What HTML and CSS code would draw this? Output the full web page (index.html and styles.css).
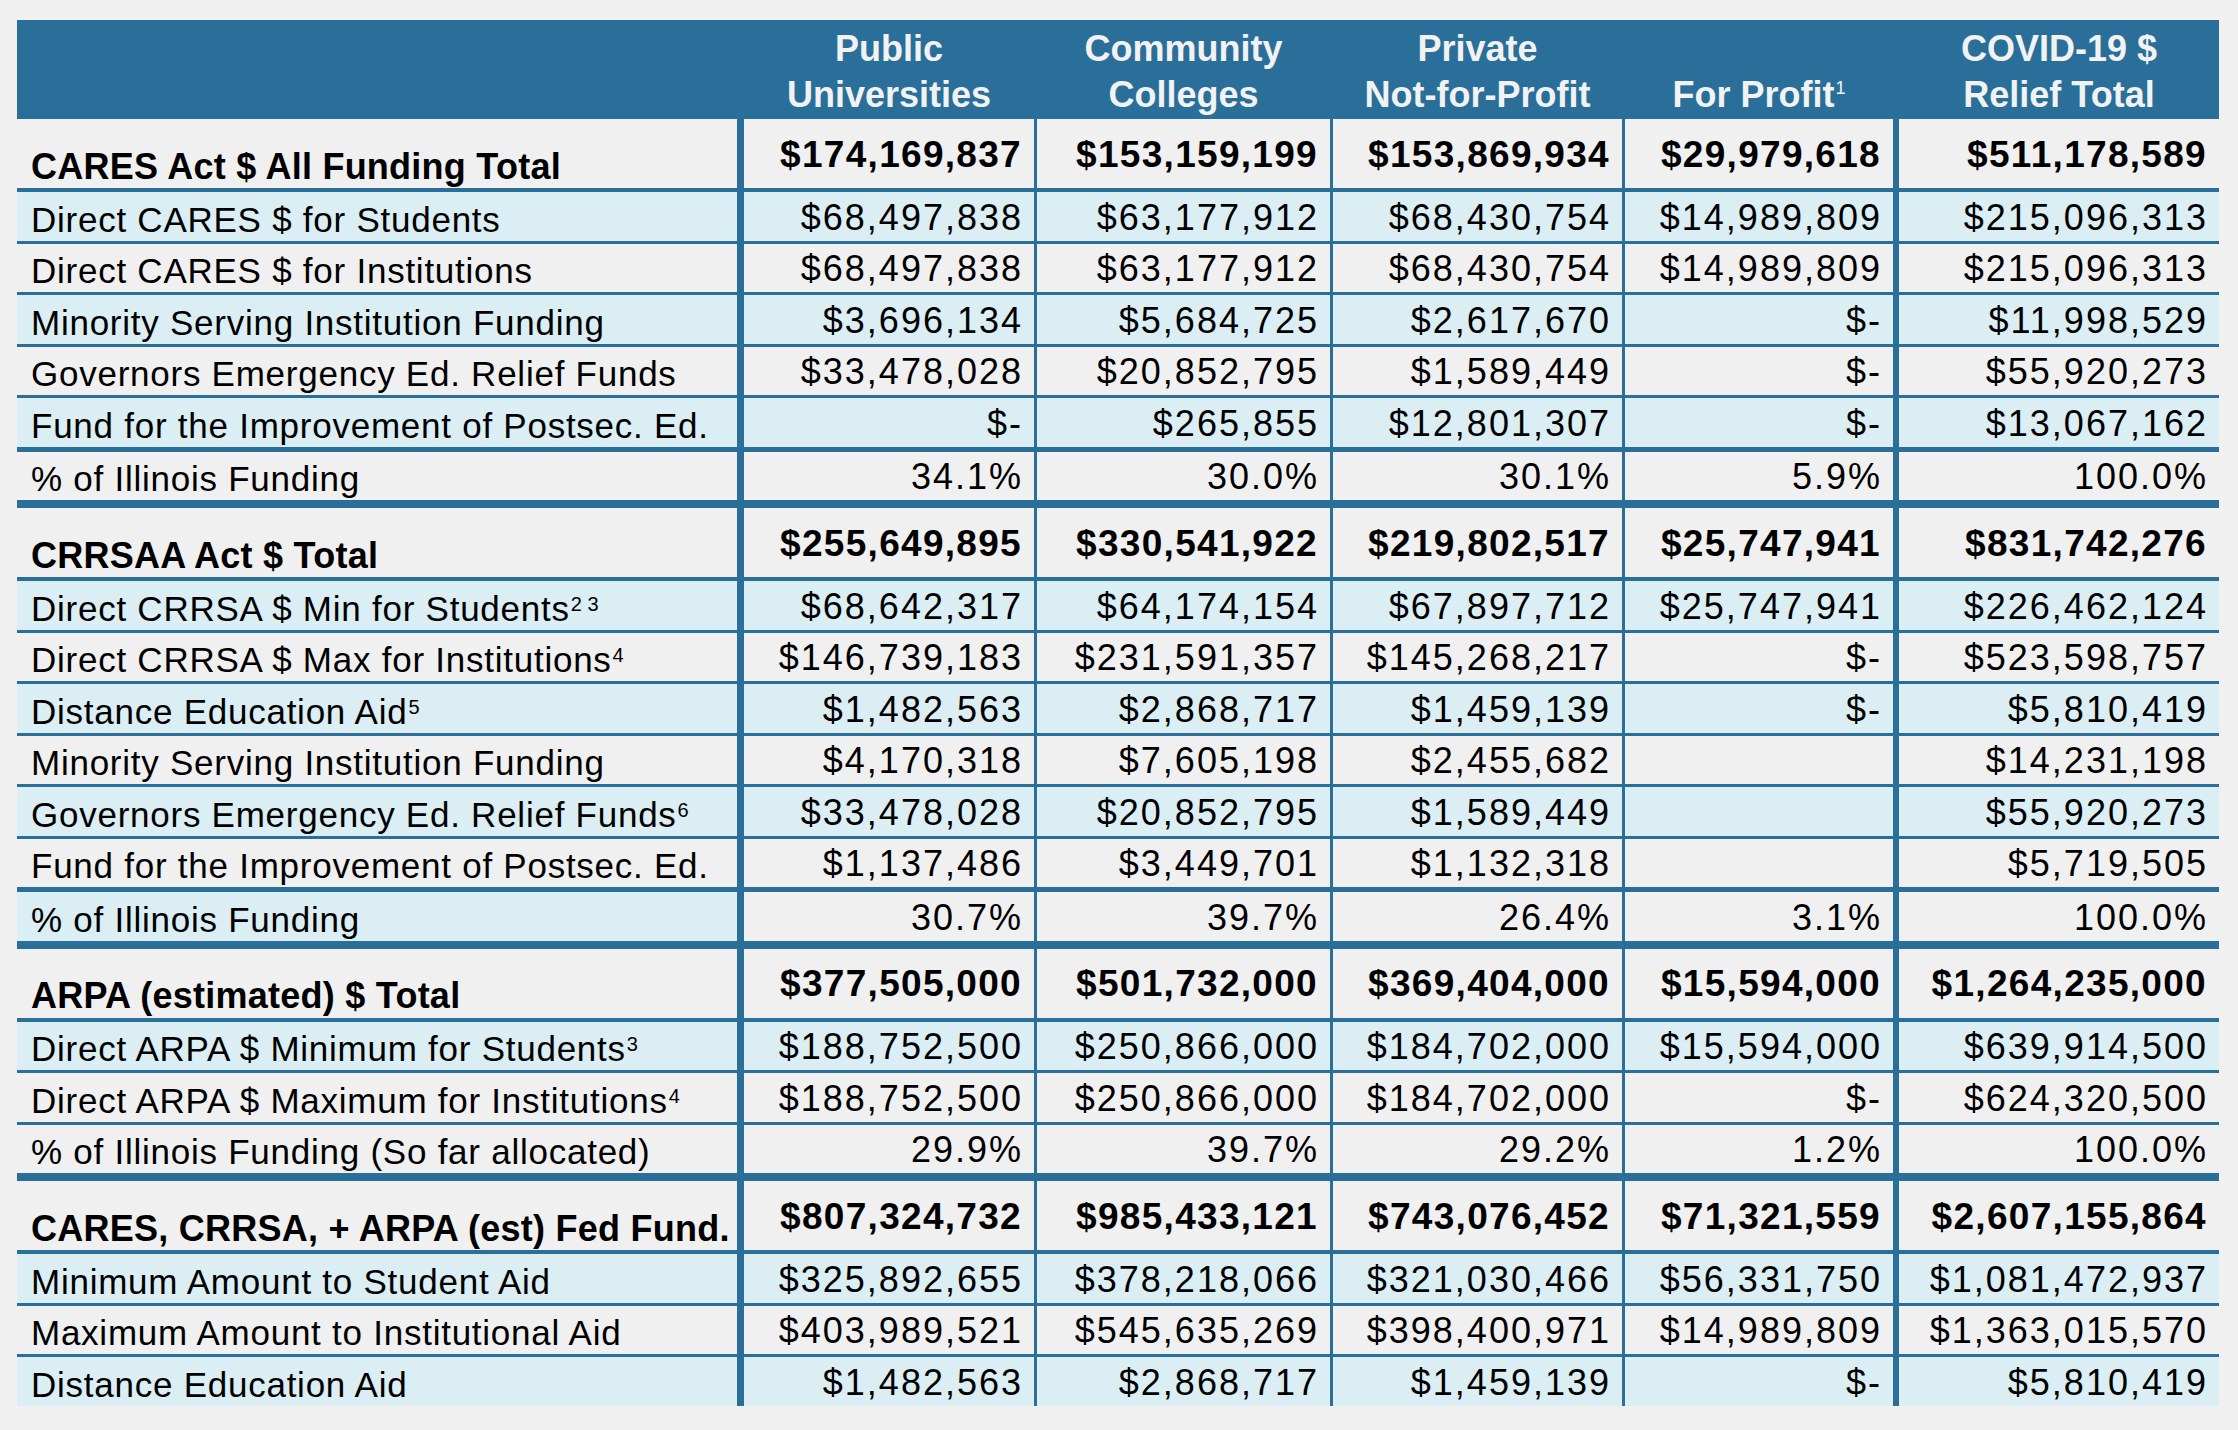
FILE: index.html
```html
<!DOCTYPE html>
<html lang="en">
<head>
<meta charset="utf-8">
<title>COVID-19 Relief Funding</title>
<link rel="stylesheet" href="styles.css">
</head>
<body>
<div class="sheet">
  <div class="row head">
    <div class="c"></div>
    <div class="c"><span>Public<br>Universities</span></div>
    <div class="c"><span>Community<br>Colleges</span></div>
    <div class="c"><span>Private<br>Not-for-Profit</span></div>
    <div class="c"><span>For Profit<sup class="hs">1</sup></span></div>
    <div class="c"><span>COVID-19 $<br>Relief Total</span></div>
  </div>

  <div class="row total">
    <div class="c">CARES Act $ All Funding Total</div>
    <div class="c">$174,169,837</div><div class="c">$153,159,199</div><div class="c">$153,869,934</div><div class="c">$29,979,618</div><div class="c">$511,178,589</div>
  </div>
  <div class="row reg band">
    <div class="c">Direct CARES $ for Students</div>
    <div class="c">$68,497,838</div><div class="c">$63,177,912</div><div class="c">$68,430,754</div><div class="c">$14,989,809</div><div class="c">$215,096,313</div>
  </div>
  <div class="row reg">
    <div class="c">Direct CARES $ for Institutions</div>
    <div class="c">$68,497,838</div><div class="c">$63,177,912</div><div class="c">$68,430,754</div><div class="c">$14,989,809</div><div class="c">$215,096,313</div>
  </div>
  <div class="row reg band">
    <div class="c">Minority Serving Institution Funding</div>
    <div class="c">$3,696,134</div><div class="c">$5,684,725</div><div class="c">$2,617,670</div><div class="c">$-</div><div class="c">$11,998,529</div>
  </div>
  <div class="row reg">
    <div class="c">Governors Emergency Ed. Relief Funds</div>
    <div class="c">$33,478,028</div><div class="c">$20,852,795</div><div class="c">$1,589,449</div><div class="c">$-</div><div class="c">$55,920,273</div>
  </div>
  <div class="row pre band">
    <div class="c">Fund for the Improvement of Postsec. Ed.</div>
    <div class="c">$-</div><div class="c">$265,855</div><div class="c">$12,801,307</div><div class="c">$-</div><div class="c">$13,067,162</div>
  </div>
  <div class="row pct">
    <div class="c">% of Illinois Funding</div>
    <div class="c">34.1%</div><div class="c">30.0%</div><div class="c">30.1%</div><div class="c">5.9%</div><div class="c">100.0%</div>
  </div>

  <div class="row total">
    <div class="c">CRRSAA Act $ Total</div>
    <div class="c">$255,649,895</div><div class="c">$330,541,922</div><div class="c">$219,802,517</div><div class="c">$25,747,941</div><div class="c">$831,742,276</div>
  </div>
  <div class="row reg band">
    <div class="c"><span>Direct CRRSA $ Min for Students<sup>2&nbsp;3</sup></span></div>
    <div class="c">$68,642,317</div><div class="c">$64,174,154</div><div class="c">$67,897,712</div><div class="c">$25,747,941</div><div class="c">$226,462,124</div>
  </div>
  <div class="row reg">
    <div class="c"><span>Direct CRRSA $ Max for Institutions<sup>4</sup></span></div>
    <div class="c">$146,739,183</div><div class="c">$231,591,357</div><div class="c">$145,268,217</div><div class="c">$-</div><div class="c">$523,598,757</div>
  </div>
  <div class="row reg band">
    <div class="c"><span>Distance Education Aid<sup>5</sup></span></div>
    <div class="c">$1,482,563</div><div class="c">$2,868,717</div><div class="c">$1,459,139</div><div class="c">$-</div><div class="c">$5,810,419</div>
  </div>
  <div class="row reg">
    <div class="c">Minority Serving Institution Funding</div>
    <div class="c">$4,170,318</div><div class="c">$7,605,198</div><div class="c">$2,455,682</div><div class="c"></div><div class="c">$14,231,198</div>
  </div>
  <div class="row reg band">
    <div class="c"><span>Governors Emergency Ed. Relief Funds<sup>6</sup></span></div>
    <div class="c">$33,478,028</div><div class="c">$20,852,795</div><div class="c">$1,589,449</div><div class="c"></div><div class="c">$55,920,273</div>
  </div>
  <div class="row pre">
    <div class="c">Fund for the Improvement of Postsec. Ed.</div>
    <div class="c">$1,137,486</div><div class="c">$3,449,701</div><div class="c">$1,132,318</div><div class="c"></div><div class="c">$5,719,505</div>
  </div>
  <div class="row pct band-label">
    <div class="c">% of Illinois Funding</div>
    <div class="c">30.7%</div><div class="c">39.7%</div><div class="c">26.4%</div><div class="c">3.1%</div><div class="c">100.0%</div>
  </div>

  <div class="row total">
    <div class="c">ARPA (estimated) $ Total</div>
    <div class="c">$377,505,000</div><div class="c">$501,732,000</div><div class="c">$369,404,000</div><div class="c">$15,594,000</div><div class="c">$1,264,235,000</div>
  </div>
  <div class="row reg band">
    <div class="c"><span>Direct ARPA $ Minimum for Students<sup>3</sup></span></div>
    <div class="c">$188,752,500</div><div class="c">$250,866,000</div><div class="c">$184,702,000</div><div class="c">$15,594,000</div><div class="c">$639,914,500</div>
  </div>
  <div class="row reg">
    <div class="c"><span>Direct ARPA $ Maximum for Institutions<sup>4</sup></span></div>
    <div class="c">$188,752,500</div><div class="c">$250,866,000</div><div class="c">$184,702,000</div><div class="c">$-</div><div class="c">$624,320,500</div>
  </div>
  <div class="row pct">
    <div class="c">% of Illinois Funding (So far allocated)</div>
    <div class="c">29.9%</div><div class="c">39.7%</div><div class="c">29.2%</div><div class="c">1.2%</div><div class="c">100.0%</div>
  </div>

  <div class="row total">
    <div class="c">CARES, CRRSA, + ARPA (est) Fed Fund.</div>
    <div class="c">$807,324,732</div><div class="c">$985,433,121</div><div class="c">$743,076,452</div><div class="c">$71,321,559</div><div class="c">$2,607,155,864</div>
  </div>
  <div class="row reg band">
    <div class="c">Minimum Amount to Student Aid</div>
    <div class="c">$325,892,655</div><div class="c">$378,218,066</div><div class="c">$321,030,466</div><div class="c">$56,331,750</div><div class="c">$1,081,472,937</div>
  </div>
  <div class="row reg">
    <div class="c">Maximum Amount to Institutional Aid</div>
    <div class="c">$403,989,521</div><div class="c">$545,635,269</div><div class="c">$398,400,971</div><div class="c">$14,989,809</div><div class="c">$1,363,015,570</div>
  </div>
  <div class="row end band">
    <div class="c">Distance Education Aid</div>
    <div class="c">$1,482,563</div><div class="c">$2,868,717</div><div class="c">$1,459,139</div><div class="c">$-</div><div class="c">$5,810,419</div>
  </div>
</div>
</body>
</html>
```

FILE: styles.css
```css
html, body {
  margin: 0;
  padding: 0;
  background: #f0f0f0;
}

body {
  font-family: "Liberation Sans", Arial, sans-serif;
  color: #000;
}

.sheet {
  margin: 20px 0 0 17px;
  width: 2202px;
}

.row {
  display: grid;
  grid-template-columns: 727px 293px 296px 292px 274px 320px;
  grid-template-rows: 1fr;
}

.c {
  box-sizing: border-box;
  border-right: 3px solid #2a6f99;
  border-bottom: 3px solid #2a6f99;
  display: flex;
  align-items: flex-end;
  justify-content: flex-end;
  padding: 0 11px 5px 0;
  font-size: 36px;
  line-height: 1;
  letter-spacing: 2px;
  white-space: nowrap;
}

.c:first-child {
  border-right-width: 7px;
  justify-content: flex-start;
  padding-left: 14px;
  padding-bottom: 4px;
  font-size: 35px;
  letter-spacing: 0.75px;
}

.c:nth-child(5) {
  border-right-width: 6px;
}

.c:last-child {
  border-right: 0;
}

sup {
  font-size: 20px;
  line-height: 1;
  vertical-align: 10px;
  letter-spacing: 0;
  margin-left: 1px;
}

/* header */
.head {
  height: 99px;
  background: #2a6f99;
}

.head .c {
  justify-content: center;
  text-align: center;
  color: #f2f2f2;
  font-weight: 700;
  font-size: 36px;
  line-height: 46px;
  letter-spacing: 0;
  padding: 0 0 1.5px 0;
  border-bottom: 0;
}

.head .hs {
  font-weight: 400;
  font-size: 18px;
  vertical-align: 13px;
}

/* totals */
.total {
  height: 73px;
}

.total .c {
  border-bottom-width: 4px;
  font-weight: 700;
  font-size: 37px;
  letter-spacing: 1.3px;
  padding-bottom: 15.5px;
  padding-right: 12px;
}

.total .c:first-child {
  font-size: 36px;
  letter-spacing: 0.25px;
  padding-bottom: 3.5px;
}

/* rows */
.reg {
  height: 51.5px;
}

.pre {
  height: 53.5px;
}

.pre .c {
  border-bottom-width: 5px;
}

.pct {
  height: 56.5px;
}

.pct .c {
  border-bottom-width: 8px;
}

.end {
  height: 48.5px;
}

.end .c {
  border-bottom: 0;
}

.band .c,
.band-label .c:first-child {
  background: #daeef3;
}
```
